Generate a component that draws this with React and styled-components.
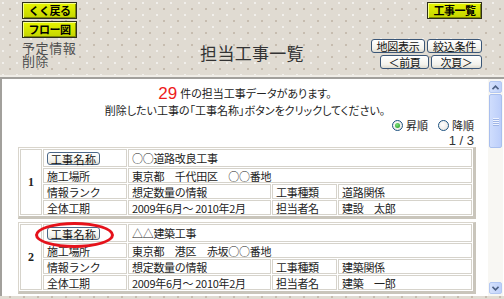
import React from "react";
import styled, { createGlobalStyle, css } from "styled-components";

const Global = createGlobalStyle`
  html, body { margin: 0; padding: 0; }
  body {
    width: 504px; height: 299px; overflow: hidden;
    font-family: "Noto Sans CJK JP", "Liberation Sans", sans-serif;
    color: #222;
  }
  * { box-sizing: border-box; }
`;

const Page = styled.div`
  width: 504px;
  height: 299px;
  display: flex;
  flex-direction: column;
  padding-bottom: 3px;
  background-color: #e0dbd2;
  background-image:
    radial-gradient(circle at 3px 3px, rgba(255,255,255,0.55) 0.8px, transparent 1.4px),
    radial-gradient(circle at 10px 9px, rgba(150,130,110,0.35) 0.8px, transparent 1.4px);
  background-size: 14px 12px;
`;

const Header = styled.header`
  height: 77px;
  flex: none;
  display: grid;
  grid-template-columns: 1fr auto 1fr;
  padding: 2px 22px 0;
  border-bottom: 2px solid #efece6;
`;

const LeftCol = styled.div`
  display: flex;
  flex-direction: column;
  align-items: flex-start;
  gap: 2px;
`;

const RightCol = styled.div`
  display: flex;
  flex-direction: column;
  align-items: flex-end;
  justify-self: end;
`;

const NavButton = styled.button`
  width: 55px;
  height: 17px;
  padding: 0;
  font-family: "Noto Sans CJK JP", sans-serif;
  font-size: 11px;
  font-weight: 700;
  line-height: 13px;
  color: #000;
  background: linear-gradient(#e6f400, #d2e200 60%, #c4d400);
  border: 1px solid #2e2e1c;
  box-shadow: inset 1px 1px 0 #f6ff8a, inset -1px -1px 0 #7f8a00;
  letter-spacing: -0.5px;
`;

const Caption = styled.div`
  font-size: 13px;
  line-height: 13px;
  letter-spacing: 0.6px;
  color: #4e4e4e;
  margin-top: 1px;
`;

const CaptionLine = styled.div`
  height: 13px;
`;

const Title = styled.h1`
  margin: 0;
  padding-top: 41px;
  font-size: 17px;
  font-weight: 400;
  line-height: 20px;
  color: #333;
  letter-spacing: 0.3px;
`;

const PagerGrid = styled.div`
  margin-top: 20px;
  display: flex;
  flex-direction: column;
  align-items: flex-end;
  gap: 2px;
`;

const PagerRow = styled.div`
  display: flex;
  gap: 2px;
`;

const XpButton = styled.button`
  width: ${(p) => p.$w}px;
  height: ${(p) => p.$h || 14}px;
  padding: 0;
  font-family: "Noto Sans CJK JP", sans-serif;
  font-size: 11px;
  line-height: 11px;
  color: #111;
  background: linear-gradient(#ffffff, #f3f2ec 70%, #dedbd0);
  border: 1px solid #3a5677;
  border-radius: 3px;
  letter-spacing: -0.3px;
`;

const Body = styled.div`
  flex: 1;
  display: flex;
  background: #fff;
  border-top: 2px solid #a2a09c;
  border-left: 2px solid #a2a09c;
  min-height: 0;
`;

const Main = styled.main`
  flex: 1;
  padding: 4px 14px 0 14px;
  overflow: hidden;
`;

const Message = styled.p`
  margin: 0;
  text-align: center;
  font-size: 11px;
  line-height: ${(p) => p.$lh}px;
  font-feature-settings: "palt";
`;

const Count = styled.span`
  font-family: "Liberation Sans", sans-serif;
  font-size: 17px;
  color: #ee1c1c;
  margin-right: 3px;
  vertical-align: -1px;
`;

const SortRow = styled.div`
  display: flex;
  justify-content: flex-end;
  gap: 10px;
  height: 13px;
  margin-top: 2px;
  font-size: 11px;
  line-height: 13px;
`;

const RadioLabel = styled.label`
  display: flex;
  align-items: center;
  gap: 3px;
`;

const RadioDot = styled.span`
  width: 11px;
  height: 11px;
  border-radius: 50%;
  border: 1px solid #1d5280;
  background: radial-gradient(circle at 40% 40%, #fff, #e4e2dc);
  display: inline-flex;
  align-items: center;
  justify-content: center;
  ${(p) =>
    p.$on &&
    css`
      &::after {
        content: "";
        width: 5px;
        height: 5px;
        border-radius: 50%;
        background: radial-gradient(circle at 40% 35%, #7fe07f, #1a9a1a);
      }
    `}
`;

const PageCount = styled.div`
  text-align: right;
  font-family: "Liberation Sans", sans-serif;
  font-size: 13px;
  line-height: 13px;
  height: 13px;
  margin-top: 2px;
  color: #333;
`;

const Table = styled.table`
  width: 458px;
  margin-left: 2px;
  margin-bottom: 3px;
  table-layout: fixed;
  border-collapse: separate;
  border-spacing: 1px;
  border-style: solid;
  border-width: 1px 3px 3px 1px;
  border-color: #d9d5cc #c9c5bb #c9c5bb #d9d5cc;
  font-size: 11px;
`;

const Cell = styled.td`
  border: 1px solid #d6d3cb;
  padding: 0 3px;
  height: ${(p) => (p.$tall ? 18 : 15)}px;
  line-height: 12px;
  white-space: nowrap;
  overflow: visible;
  letter-spacing: -0.3px;
`;

const NumCell = styled(Cell)`
  text-align: center;
  vertical-align: middle;
  font-family: "Liberation Serif", serif;
  font-weight: 700;
  font-size: 12px;
  letter-spacing: 0;
`;

const NameWrap = styled.span`
  position: relative;
  display: inline-block;
  vertical-align: middle;
`;

const NameButton = styled(XpButton)`
  display: block;
  width: 53px;
  height: 13px;
  line-height: 10px;
  letter-spacing: 0.4px;
  border-color: #4b6787;
`;

const Highlight = styled.span`
  position: absolute;
  left: -12px;
  right: -14px;
  top: -5px;
  bottom: -8px;
  border: 3px solid #e5121b;
  border-radius: 50%;
  pointer-events: none;
`;

const Scrollbar = styled.div`
  width: 15px;
  margin-right: 1px;
  flex: none;
  display: flex;
  flex-direction: column;
  padding: 2px 1px 2px 1px;
  background: #f8f7f3;
`;

const ScrollArrow = styled.div`
  height: 12px;
  border: 1px solid #b4c8f2;
  border-radius: 2px;
  background: linear-gradient(90deg, #d6e2fd, #bfd1fa);
  display: flex;
  align-items: center;
  justify-content: center;
`;

const ScrollTrack = styled.div`
  flex: 1;
  padding-top: 1px;
`;

const Thumb = styled.div`
  height: 54px;
  border: 1px solid #a9bfee;
  border-radius: 2px;
  background: linear-gradient(90deg, #cfddfd, #bccefa);
  display: flex;
  flex-direction: column;
  align-items: center;
  justify-content: center;
  gap: 1px;
`;

const Grip = styled.span`
  width: 6px;
  height: 1px;
  background: #eef3ff;
  box-shadow: 0 1px 0 #9fb5e6;
`;

const Chevron = ({ up }) => (
  <svg width="7" height="5" viewBox="0 0 7 5">
    <path
      d={up ? "M0.5 4.2 L3.5 1.2 L6.5 4.2" : "M0.5 0.8 L3.5 3.8 L6.5 0.8"}
      fill="none"
      stroke="#4d6185"
      strokeWidth="1.6"
    />
  </svg>
);

const projects = [
  {
    no: 1,
    name: "○○道路改良工事",
    place: "東京都　千代田区　○○番地",
    kind: "道路関係",
    person: "建設　太郎",
  },
  {
    no: 2,
    name: "△△建築工事",
    place: "東京都　港区　赤坂○○番地",
    kind: "建築関係",
    person: "建築　一郎",
    highlight: true,
  },
];

function ProjectTable({ p }) {
  return (
    <Table>
      <colgroup>
        <col style={{ width: 22 }} />
        <col style={{ width: 84 }} />
        <col style={{ width: 143 }} />
        <col style={{ width: 65 }} />
        <col />
      </colgroup>
      <tbody>
        <tr>
          <NumCell rowSpan={4}>{p.no}</NumCell>
          <Cell $tall>
            <NameWrap>
              <NameButton $w={53}>工事名称</NameButton>
              {p.highlight && <Highlight />}
            </NameWrap>
          </Cell>
          <Cell $tall colSpan={3}>
            {p.name}
          </Cell>
        </tr>
        <tr>
          <Cell>施工場所</Cell>
          <Cell colSpan={3}>{p.place}</Cell>
        </tr>
        <tr>
          <Cell>情報ランク</Cell>
          <Cell>想定数量の情報</Cell>
          <Cell>工事種類</Cell>
          <Cell>{p.kind}</Cell>
        </tr>
        <tr>
          <Cell>全体工期</Cell>
          <Cell>2009年6月～ 2010年2月</Cell>
          <Cell>担当者名</Cell>
          <Cell> {p.person}</Cell>
        </tr>
      </tbody>
    </Table>
  );
}

export default function App() {
  return (
    <>
      <Global />
      <Page>
        <Header>
          <LeftCol>
            <NavButton>くく戻る</NavButton>
            <NavButton>フロー図</NavButton>
            <Caption>
              <CaptionLine>予定情報</CaptionLine>
              <CaptionLine>削除</CaptionLine>
            </Caption>
          </LeftCol>
          <Title>担当工事一覧</Title>
          <RightCol>
            <NavButton>工事一覧</NavButton>
            <PagerGrid>
              <PagerRow>
                <XpButton $w={54}>地図表示</XpButton>
                <XpButton $w={55}>絞込条件</XpButton>
              </PagerRow>
              <PagerRow>
                <XpButton $w={49}>＜前頁</XpButton>
                <XpButton $w={51}>次頁＞</XpButton>
              </PagerRow>
            </PagerGrid>
          </RightCol>
        </Header>
        <Body>
          <Main>
            <Message $lh={20}>
              <Count>29</Count>件の担当工事データがあります。
            </Message>
            <Message $lh={13}>
              削除したい工事の「工事名称」ボタンをクリックしてください。
            </Message>
            <SortRow>
              <RadioLabel>
                <RadioDot $on />
                昇順
              </RadioLabel>
              <RadioLabel>
                <RadioDot />
                降順
              </RadioLabel>
            </SortRow>
            <PageCount>1 / 3</PageCount>
            {projects.map((p) => (
              <ProjectTable key={p.no} p={p} />
            ))}
          </Main>
          <Scrollbar>
            <ScrollArrow>
              <Chevron up />
            </ScrollArrow>
            <ScrollTrack>
              <Thumb>
                <Grip />
                <Grip />
                <Grip />
                <Grip />
              </Thumb>
            </ScrollTrack>
            <ScrollArrow>
              <Chevron />
            </ScrollArrow>
          </Scrollbar>
        </Body>
      </Page>
    </>
  );
}
